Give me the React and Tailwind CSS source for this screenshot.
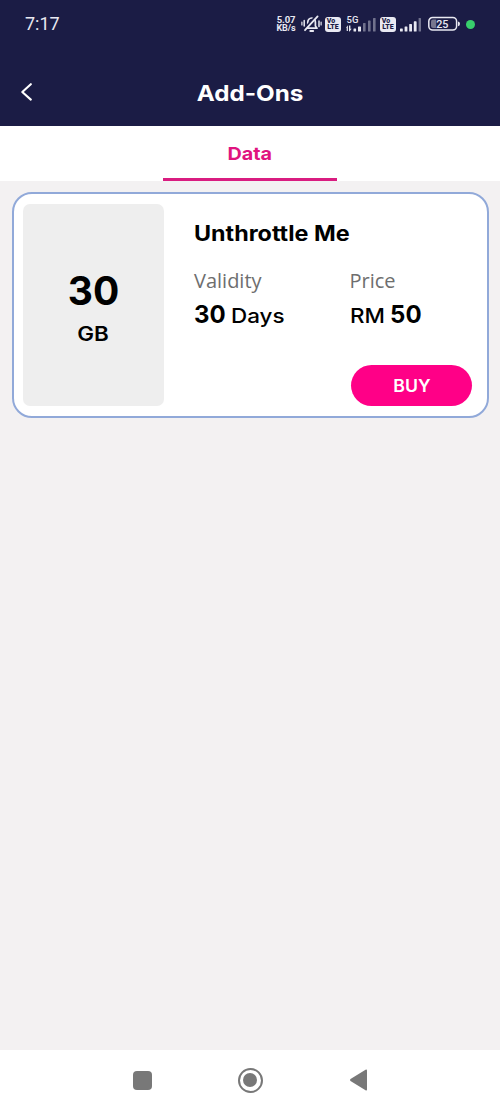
const VoLteIcon = () => (
  <div className="flex h-[15px] w-4 flex-col items-center justify-center rounded-[3px] bg-[#e9e9f2] font-['Roboto',sans-serif] text-[7px] font-black leading-[6.5px] text-[#1b1c45]">
    <span className="-ml-1">Vo</span>
    <span>LTE</span>
  </div>
);

const MutedBellIcon = () => (
  <svg width="21" height="18" viewBox="0 0 21 18" fill="none" stroke="#e9e9f2" strokeLinecap="round">
    <path d="M5.2 13.2 6.8 11V7.2C6.8 5 8.4 3 10.6 3 12.8 3 14.4 5 14.4 7.2V11l1.6 2.2Z" strokeWidth="1.7" strokeLinejoin="round" />
    <path d="M9.3 16h2.8" strokeWidth="2" />
    <path d="M15.5 1 3 14.5" stroke="#1b1c45" strokeWidth="2.6" />
    <path d="M16.6 1.4 4 15.2" strokeWidth="1.8" />
    <path d="M3.2 5.5v5.5M18 6v5.5" strokeWidth="1.5" />
    <path d="M.9 7v3M20.1 7v3" strokeWidth="1.2" />
  </svg>
);

const Signal5GIcon = () => (
  <svg width="31" height="18" viewBox="0 0 31 18" fill="#e9e9f2">
    <text x="0.5" y="8.3" fontSize="9.5" fontFamily="Roboto, sans-serif" fontWeight="500">5G</text>
    <path d="M0 12.8 1.9 10.3V16H.7V12.8ZM3 10.5H4.4V13.8H5.7L3.5 16.5H3Z" />
    <rect x="7.5" y="13.5" width="2.6" height="3" rx="0.6" />
    <rect x="12" y="11.5" width="3" height="5" rx="0.6" />
    <g opacity="0.42">
      <rect x="17" y="8" width="2.6" height="8.5" rx="0.6" />
      <rect x="22" y="5.5" width="2.6" height="11" rx="0.6" />
      <rect x="27" y="3" width="2.6" height="13.5" rx="0.6" />
    </g>
  </svg>
);

const SignalIcon = () => (
  <svg width="22" height="18" viewBox="0 0 22 18" fill="#e9e9f2">
    <rect x="0" y="13.5" width="2.8" height="3" rx="0.6" />
    <rect x="4.6" y="11.5" width="2.8" height="5" rx="0.6" />
    <rect x="9.2" y="9" width="2.8" height="7.5" rx="0.6" />
    <rect x="13.8" y="6.3" width="2.8" height="10.2" rx="0.6" />
    <rect x="18.6" y="3" width="2.4" height="13.5" rx="0.6" opacity="0.42" />
  </svg>
);

const BatteryIcon = () => (
  <svg width="33" height="16" viewBox="0 0 33 16" fill="none">
    <rect x="0.8" y="1.5" width="27.8" height="12.6" rx="3.8" stroke="#e9e9f2" strokeWidth="1.5" />
    <path d="M5 3.5H8.2V12.1H5Q3 12.1 3 10.1V5.5Q3 3.5 5 3.5Z" fill="#77778f" />
    <path d="M30 5.4Q32 5.6 32 7.8T30 10.2Z" fill="#e9e9f2" />
    <text x="14.3" y="11.6" fontSize="10.8" textAnchor="middle" fontFamily="Roboto, sans-serif" fontWeight="500" fill="#e9e9f2">25</text>
  </svg>
);

const StatusBar = () => (
  <div className="flex h-12 items-center pl-[25px] pr-[25px] font-['Roboto',sans-serif] text-[#e9e9f2]">
    <span className="text-[18px] leading-6">7:17</span>
    <div className="ml-auto flex items-center">
      <div className="mr-[5px] w-5 whitespace-nowrap text-center text-[9px] font-bold leading-[9px] tracking-[-0.1px]">
        <div className="text-[9.5px]">5.07</div>
        <div>KB/s</div>
      </div>
      <MutedBellIcon />
      <div className="ml-[3px] mr-[5px]"><VoLteIcon /></div>
      <Signal5GIcon />
      <div className="ml-[3px] mr-1"><VoLteIcon /></div>
      <SignalIcon />
      <div className="ml-[6px] mr-[5px]"><BatteryIcon /></div>
      <div className="size-[9px] rounded-full bg-[#38cf6c]" />
    </div>
  </div>
);

const Header = () => (
  <div className="grid h-[78px] grid-cols-[60px_1fr_60px] items-center pt-[11px]">
    <button className="pl-5">
      <svg width="14" height="20" viewBox="0 0 14 20" fill="none" stroke="#fff" strokeWidth="2.1" strokeLinecap="round" strokeLinejoin="round">
        <path d="M10.8 1.2 2.3 9 10.8 16.6" />
      </svg>
    </button>
    <h1 className="scale-x-[1.1] text-center text-[22px] font-bold leading-7 text-white">Add-Ons</h1>
  </div>
);

const AddOnCard = ({ amount, unit, title, days, price }) => (
  <div className="flex h-[226px] rounded-[20px] border-2 border-[#91a9d9] bg-white py-[10px] pl-[9.5px] pr-[14.5px]">
    <div className="flex w-[141px] shrink-0 flex-col items-center rounded-[7px] bg-[#eeeeee] pt-[63px] text-black">
      <span className="text-[39px] font-bold leading-[48px]">{amount}</span>
      <span className="mt-[7px] scale-x-[1.12] text-[20px] font-semibold leading-6">{unit}</span>
    </div>
    <div className="flex grow flex-col pl-[30px] pt-[16px] text-black">
      <h2 className="origin-left scale-x-[1.11] whitespace-nowrap text-[21px] font-bold leading-7">{title}</h2>
      <div className="mt-[19px] grid grid-cols-[155.5px_1fr]">
        <div>
          <p className="font-['Open_Sans',sans-serif] text-[20px] leading-7 text-[#6e6e6e]">Validity</p>
          <p className="mt-1 whitespace-nowrap text-[20px] font-medium leading-8">
            <span className="text-[24px] font-bold">{days}</span>{' '}
            <span className="inline-block origin-left scale-x-[1.12]">Days</span>
          </p>
        </div>
        <div>
          <p className="font-['Open_Sans',sans-serif] text-[20px] leading-7 text-[#6e6e6e]">Price</p>
          <p className="mt-1 whitespace-nowrap text-[20px] font-medium leading-8">
            <span className="mr-[4px] inline-block origin-left scale-x-[1.12]">RM</span>{' '}
            <span className="text-[24px] font-bold">{price}</span>
          </p>
        </div>
      </div>
      <button className="mt-auto h-[41px] w-[121px] self-end rounded-full bg-[#ff0087] pl-px pt-[3px] text-[17px] font-semibold text-white">
        <span className="inline-block scale-x-[1.04]">BUY</span>
      </button>
    </div>
  </div>
);

const NavBar = () => (
  <div className="flex h-[60px] items-center justify-center gap-[86px] bg-white">
    <div className="size-[19px] rounded-[4px] bg-[#787878]" />
    <div className="flex size-[25px] items-center justify-center rounded-full border-2 border-[#787878]">
      <div className="size-[14px] rounded-full bg-[#787878]" />
    </div>
    <svg width="19" height="22" viewBox="0 0 19 22" fill="#787878">
      <path d="M1.5 10 16.5.7Q18 0 18 1.5V20.5Q18 22 16.5 21.3L1.5 12Q.4 11 1.5 10Z" />
    </svg>
  </div>
);

export default function App() {
  return (
    <div className="flex h-[1110px] w-[500px] flex-col overflow-hidden bg-[#f3f1f2] font-['Inter',sans-serif]">
      <header className="bg-[#1b1c45]">
        <StatusBar />
        <Header />
      </header>

      {/* Tabs */}
      <nav className="flex h-[55px] justify-center bg-white">
        <button className="w-[174px] border-b-[3px] border-[#d91c80] pt-[5px] text-[17.5px] font-bold text-[#e0147f]">
          <span className="inline-block scale-x-[1.13]">Data</span>
        </button>
      </nav>

      <main className="grow px-[11.5px] pt-[11px]">
        <AddOnCard amount="30" unit="GB" title="Unthrottle Me" days="30" price="50" />
      </main>

      <NavBar />
    </div>
  );
}
